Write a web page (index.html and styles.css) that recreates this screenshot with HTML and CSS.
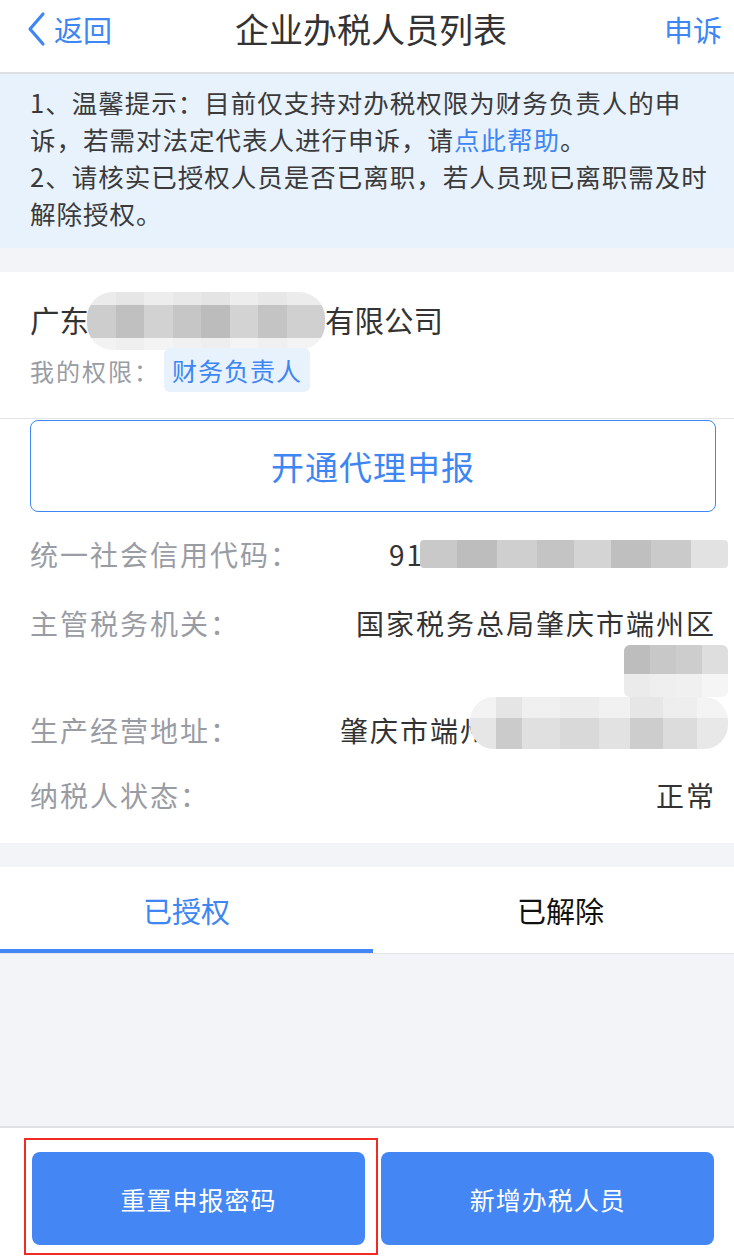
FILE: index.html
```html
<!DOCTYPE html>
<html lang="zh-CN">
<head>
  <meta charset="UTF-8">
  <title>企业办税人员列表</title>
  <meta name="viewport" content="width=device-width, initial-scale=1">
  <link rel="stylesheet" href="styles.css">
</head>
<body>

<div class="page">
  <header class="nav">
    <a class="nav-back">
      <svg width="22" height="36" viewBox="0 0 22 36"><polyline points="17,3 4,18 17,33" fill="none" stroke="#3d86f3" stroke-width="3.2" stroke-linecap="round" stroke-linejoin="round"/></svg>
      <span>返回</span>
    </a>
    <h1 class="nav-title">企业办税人员列表</h1>
    <a class="nav-right">申诉</a>
  </header>

  <div class="notice">
    <p>1、温馨提示：目前仅支持对办税权限为财务负责人的申诉，若需对法定代表人进行申诉，请<a class="link">点此帮助</a>。</p>
    <p>2、请核实已授权人员是否已离职，若人员现已离职需及时解除授权。</p>
  </div>

  <section class="card">
    <div class="company">
      <div class="company-name">广东<span class="mask mask-name"></span>有限公司</div>
      <div class="rights">
        <span class="rights-label">我的权限：</span>
        <span class="badge">财务负责人</span>
      </div>
    </div>

    <button class="btn-outline">开通代理申报</button>

    <div class="info">
      <div class="row">
        <span class="label">统一社会信用代码：</span>
        <span class="value code">91<span class="mask mask-code"></span></span>
      </div>
      <div class="row row-tall">
        <span class="label">主管税务机关：</span>
        <span class="value stack">
          <span>国家税务总局肇庆市端州区</span>
          <span class="mask mask-line"></span>
        </span>
      </div>
      <div class="row">
        <span class="label">生产经营地址：</span>
        <span class="value addr">肇庆市端州<span class="mask mask-addr"></span></span>
      </div>
      <div class="row">
        <span class="label">纳税人状态：</span>
        <span class="value">正常</span>
      </div>
    </div>
  </section>

  <div class="tabs">
    <div class="tab active">已授权</div>
    <div class="tab">已解除</div>
  </div>

  <div class="empty"></div>

  <footer class="bottom">
    <div class="highlight">
      <button class="btn-primary">重置申报密码</button>
    </div>
    <button class="btn-primary">新增办税人员</button>
  </footer>
</div>

</body>
</html>
```

FILE: styles.css
```css
:root {
  --blue: #3d86f3;
  --btn-blue: #4487f4;
  --text: #333;
  --gray-text: #9a9ca3;
  --page-bg: #f3f4f8;
  --notice-bg: #e8f2fd;
  --line: #e3e4e8;
}

* {
  box-sizing: border-box;
}

body {
  margin: 0;
  font-family: "Noto Sans CJK SC", "Noto Sans", sans-serif;
  background-color: var(--page-bg);
  color: var(--text);
}

.page {
  width: 734px;
  height: 1260px;
  display: flex;
  flex-direction: column;
  overflow: hidden;
}

/* 顶部导航 */
.nav {
  height: 74px;
  background: #fff;
  border-bottom: 2px solid #dedfe3;
  display: flex;
  align-items: center;
  justify-content: space-between;
  padding: 0 12px 14px 26px;
  position: relative;
}

.nav-back {
  display: flex;
  align-items: center;
  gap: 6px;
  color: var(--blue);
  font-size: 29px;
}

.nav-title {
  position: absolute;
  left: 8px;
  right: 0;
  top: 4px;
  margin: 0;
  text-align: center;
  font-size: 34px;
  font-weight: normal;
  color: #333;
  pointer-events: none;
}

.nav-right {
  color: var(--blue);
  font-size: 29px;
}

/* 提示 */
.notice {
  background: var(--notice-bg);
  padding: 9px 18px 17px 30px;
  font-size: 25.5px;
  letter-spacing: 1px;
  line-height: 37px;
  color: #3a3a3a;
}

.notice p {
  margin: 0;
}

.link {
  color: var(--blue);
}

/* 企业信息 */
.card {
  background: #fff;
  margin-top: 24px;
  padding-bottom: 28px;
}

.company {
  padding: 16px 20px 26px 30px;
  border-bottom: 1px solid var(--line);
}

.company-name {
  font-size: 29.5px;
  line-height: 48px;
  color: #333;
  display: flex;
  align-items: center;
}

.rights {
  display: flex;
  align-items: center;
  margin-top: -2px;
}

.rights-label {
  font-size: 24px;
  letter-spacing: 2px;
  color: var(--gray-text);
}

.badge {
  margin-left: 4px;
  background: var(--notice-bg);
  color: var(--blue);
  font-size: 25px;
  letter-spacing: 1px;
  line-height: 44px;
  padding: 0 8px;
  border-radius: 6px;
}

.btn-outline {
  display: block;
  width: 686px;
  height: 92px;
  margin: 1px 0 0 30px;
  background: #fff;
  border: 1px solid var(--blue);
  border-radius: 8px;
  color: var(--blue);
  font-family: inherit;
  font-size: 33px;
  letter-spacing: 1px;
}

.info {
  padding: 22px 20px 0 30px;
}

.row {
  display: flex;
  justify-content: space-between;
  align-items: flex-start;
  font-size: 28px;
  line-height: 40px;
  margin-bottom: 29px;
}

.row:last-child {
  margin-bottom: 0;
}

.row-tall {
  margin-bottom: 13px;
}

.row + .row:last-child {
  margin-top: -4px;
}

.label {
  color: var(--gray-text);
  letter-spacing: 2px;
}

.value {
  color: #333;
  text-align: right;
  letter-spacing: 2px;
  margin-right: -2px;
}

.stack {
  display: flex;
  flex-direction: column;
  align-items: flex-end;
}

.code,
.addr {
  display: flex;
  align-items: center;
}

/* 打码区域 */
.mask {
  display: inline-block;
  background: linear-gradient(90deg, #c9c9c9 0 12%, #bdbdbd 12% 25%, #cfcfcf 25% 38%, #c4c4c4 38% 50%, #d4d4d4 50% 62%, #bfbfbf 62% 75%, #cacaca 75% 88%, #e2e2e2 88%);
  border-radius: 8px;
}

.mask-name {
  width: 238px;
  height: 58px;
  margin: 4px 0 0 -2px;
  border-radius: 26px;
  background: linear-gradient(180deg, rgba(255,255,255,0.6) 0 22%, transparent 22% 80%, rgba(255,255,255,0.75) 80%),
              linear-gradient(90deg, #cdcdcd 0 12%, #c0c0c0 12% 24%, #d2d2d2 24% 36%, #c6c6c6 36% 48%, #bcbcbc 48% 60%, #d3d3d3 60% 72%, #c4c4c4 72% 84%, #d0d0d0 84%);
}

.mask-code {
  width: 308px;
  height: 28px;
  border-radius: 4px;
  margin-left: -4px;
  margin-right: -12px;
}

.mask-line {
  width: 104px;
  height: 52px;
  margin-top: 2px;
  margin-right: -12px;
  border-radius: 6px;
  background: linear-gradient(180deg, transparent 0 55%, rgba(255,255,255,0.7) 55%),
              linear-gradient(90deg, #bdbdbd 0 25%, #c8c8c8 25% 50%, #cdcdcd 50% 75%, #dedede 75%);
}

.mask-addr {
  width: 258px;
  height: 52px;
  margin-left: -20px;
  margin-right: -12px;
  align-self: flex-start;
  margin-top: -13px;
  border-radius: 24px;
  background: linear-gradient(180deg, rgba(255,255,255,0.5) 0 40%, transparent 40%),
              linear-gradient(90deg, #e6e6e6 0 10%, #cbcbcb 10% 20%, #e0e0e0 20% 35%, #d9d9d9 35% 50%, #e2e2e2 50% 62%, #cdcdcd 62% 75%, #dcdcdc 75% 88%, #e8e8e8 88%);
}

/* 标签页 */
.tabs {
  margin-top: 24px;
  background: #fff;
  display: flex;
  height: 87px;
  border-bottom: 1px solid var(--line);
}

.tab {
  flex: 1;
  display: flex;
  align-items: center;
  justify-content: center;
  font-size: 29px;
  color: #111;
  border-bottom: 4px solid transparent;
  padding-top: 4px;
  padding-left: 14px;
}

.tab.active {
  flex: 0 0 373px;
  padding-left: 0;
  color: var(--blue);
  border-bottom-color: var(--btn-blue);
}

.empty {
  flex: 1;
  background: var(--page-bg);
}

/* 底部按钮 */
.bottom {
  height: 134px;
  background: #fff;
  border-top: 2px solid #dfe0e4;
  display: flex;
  align-items: flex-start;
  padding: 10px 20px 0 24px;
  gap: 3px;
}

.highlight {
  border: 2px solid #f02b23;
  padding: 12px 11px 8px 6px;
  width: 355px;
  height: 117px;
}

.btn-primary {
  width: 333px;
  height: 93px;
  border: none;
  border-radius: 8px;
  background: var(--btn-blue);
  color: #fff;
  font-family: inherit;
  font-size: 25px;
  letter-spacing: 1px;
}

.bottom > .btn-primary {
  margin-top: 14px;
}
```
